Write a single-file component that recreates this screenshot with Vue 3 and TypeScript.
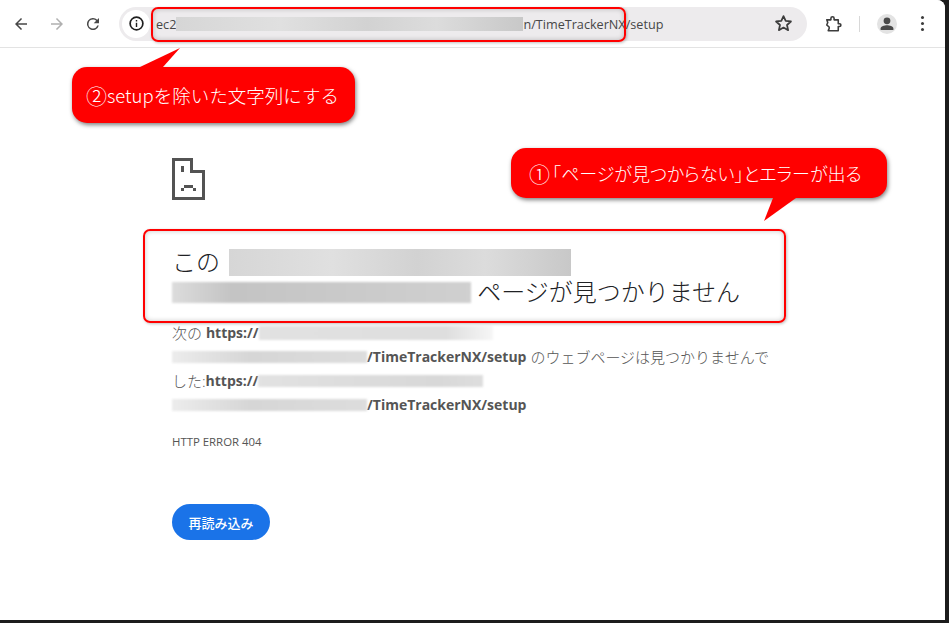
<script setup lang="ts">
const urlPath = '/TimeTrackerNX/setup';
</script>

<template>
  <div class="screen">
    <div class="window">
      <header class="toolbar">
        <svg class="nav first" viewBox="0 0 24 24"><path d="M20 11H7.8l5.6-5.6L12 4l-8 8 8 8 1.4-1.4L7.8 13H20z" fill="#474747" /></svg>
        <svg class="nav fwd" viewBox="0 0 24 24"><path d="M4 11h12.2l-5.6-5.6L12 4l8 8-8 8-1.4-1.4 5.6-5.6H4z" fill="#b0b0b0" /></svg>
        <svg class="nav reload" viewBox="0 0 24 24"><path d="M17.65 6.35A8 8 0 1 0 19.73 14h-2.08A6 6 0 1 1 12 6c1.66 0 3.14.69 4.22 1.78L13 11h7V4z" fill="#474747" /></svg>
        <div class="omnibox">
          <span class="info">
            <svg viewBox="0 0 24 24" width="17" height="17"><circle cx="12" cy="12" r="9" fill="none" stroke="#1f1f1f" stroke-width="2.4" /><path d="M11 11h2v6h-2zM11 7h2v2h-2z" fill="#1f1f1f" /></svg>
          </span>
          <span class="url">ec2<span class="blur url-blur"></span>n{{ urlPath }}</span>
          <svg class="star" viewBox="0 0 24 24"><path d="M12 3.6l2.5 5.5 6 .6-4.5 4 1.3 5.9-5.3-3-5.3 3L8 13.7l-4.5-4 6-.6z" fill="none" stroke="#3c3c3c" stroke-width="2" stroke-linejoin="round" /></svg>
        </div>
        <svg class="puzzle" viewBox="0 0 24 24"><path d="M4.5 7h5V5.2a1.9 1.9 0 0 1 3.8 0V7h5v4.6h1.5a1.7 1.7 0 0 1 0 3.4h-1.5v5h-12l.9-2.2a2.4 2.4 0 0 0 0-2.4L4.5 13.2l1.2-3z" fill="none" stroke="#3c3c3c" stroke-width="1.9" stroke-linejoin="round" /></svg>
        <span class="divider"></span>
        <span class="avatar">
          <svg viewBox="0 0 20 20" width="20" height="20"><circle cx="10" cy="6.8" r="3.4" fill="#4a4a4a" /><path d="M3.6 16v-1.6c0-2.2 4-3.2 6.4-3.2s6.4 1 6.4 3.2V16z" fill="#4a4a4a" /></svg>
        </span>
        <span class="dots"><i></i><i></i><i></i></span>
      </header>

      <main class="page">
        <svg class="sad" width="33" height="42" viewBox="0 0 33 42" shape-rendering="crispEdges">
          <path d="M0 0h21v3h3v3h3v3h3v3h3v30H0zM3 3v36h27V15H18V3z" fill="#535353" fill-rule="evenodd" />
          <path d="M21 3h3v3h3v3h3v3h-9z" fill="#fff" />
          <path d="M9 8h3v6H9zM9 30h3v3H9zM12 27h9v3h-9zM21 30h3v3h-3z" fill="#535353" />
        </svg>
        <h1 class="title">
          <span class="line">この <span class="blur title-blur-1"></span></span>
          <span class="line"><span class="blur title-blur-2"></span> ページが見つかりません</span>
        </h1>
        <p class="desc">
          <span class="row">次の <b>https://</b><span class="blur b1"></span></span>
          <span class="row"><span class="blur b2"></span><b>{{ urlPath }}</b> のウェブページは見つかりませんで</span>
          <span class="row">した:<b>https://</b><span class="blur b3"></span></span>
          <span class="row"><span class="blur b2"></span><b>{{ urlPath }}</b></span>
        </p>
        <div class="code">HTTP ERROR 404</div>
        <button class="reload-btn">再読み込み</button>
      </main>
    </div>

    <div class="frame frame-url"></div>
    <div class="frame frame-title"></div>

    <div class="callout callout-setup">
      <svg class="tail" width="41" height="19" viewBox="0 0 41 19"><path d="M0 19L40 0 23 19z" fill="#f00" /></svg>
      <span class="circled">②</span>setupを除いた文字列にする
    </div>
    <div class="callout callout-error">
      <svg class="tail" width="40" height="30" viewBox="0 0 40 30"><path d="M9 0L0 23 32 0z" fill="#f00" /></svg>
      <span class="circled">①</span><span class="msg">「ページが見つからない」とエラーが出る</span>
    </div>
  </div>
</template>

<style>
html,
body {
  margin: 0;
  background: #1c1c1c;
}
</style>

<style scoped>
.screen {
  position: relative;
  width: 949px;
  height: 623px;
  overflow: hidden;
  background: #1c1c1c;
  font-family: "Open Sans", "Noto Sans CJK JP", sans-serif;
}
.window {
  width: 945px;
  height: 620px;
  background: #fff;
  border-top-right-radius: 8px;
  overflow: hidden;
}
.toolbar {
  box-sizing: border-box;
  height: 48px;
  display: flex;
  align-items: center;
  background: #fff;
  border-bottom: 1px solid #e3e3e3;
}
.nav {
  width: 18px;
  height: 18px;
  flex: none;
}
.first {
  margin-left: 12px;
}
.fwd {
  margin-left: 18px;
}
.reload {
  margin-left: 18px;
}
.omnibox {
  margin-left: 17px;
  flex: none;
  width: 688px;
  height: 34px;
  border-radius: 17px;
  background: #edebed;
  display: flex;
  align-items: center;
}
.info {
  margin-left: 3px;
  width: 28px;
  height: 28px;
  border-radius: 50%;
  background: #fff;
  display: flex;
  align-items: center;
  justify-content: center;
  flex: none;
}
.url {
  margin-left: 6px;
  font-size: 12.65px;
  color: #474747;
  display: flex;
  align-items: center;
  white-space: nowrap;
}
.url-blur {
  width: 347px;
  height: 14px;
}
.star {
  width: 21px;
  height: 21px;
  margin-left: auto;
  margin-right: 13px;
  flex: none;
}
.puzzle {
  width: 20px;
  height: 20px;
  margin-left: 16px;
  flex: none;
}
.divider {
  width: 1px;
  height: 16px;
  background: #d8d8d8;
  margin-left: 16px;
  flex: none;
}
.avatar {
  width: 20px;
  height: 20px;
  margin-left: 17px;
  border-radius: 50%;
  background: #e3e3e3;
  flex: none;
}
.dots {
  margin-left: 24px;
  display: flex;
  flex-direction: column;
  gap: 3px;
  flex: none;
}
.dots i {
  display: block;
  width: 3px;
  height: 3px;
  border-radius: 50%;
  background: #3c3c3c;
}
.page {
  padding: 110px 0 0 172px;
  color: #555;
}
.sad {
  display: block;
}
.title {
  margin: 47px 0 0;
  font-size: 24px;
  font-weight: 300;
  line-height: 30px;
  color: #202124;
}
.line {
  display: flex;
  align-items: center;
  white-space: pre;
  height: 30px;
}
.blur {
  display: inline-block;
  background: linear-gradient(90deg, #d6d6d6, #e0e0e0 30%, #d2d2d2 55%, #dcdcdc 75%, #c8c8c8);
}
.title-blur-1 {
  width: 342px;
  height: 27px;
  margin-left: 3px;
}
.title-blur-2 {
  width: 299px;
  height: 21px;
  background: linear-gradient(90deg, #dcdcdc, #c4c4c4 20%, #cacaca 60%, #d0d0d0);
  filter: blur(1px);
}
.desc {
  margin: 14px 0 0;
  font-size: 15px;
  line-height: 24px;
  font-weight: 300;
}
.desc b {
  font-size: 14px;
  font-weight: 700;
}
.row {
  display: flex;
  align-items: center;
  white-space: pre;
  height: 24px;
}
.b1 {
  width: 234px;
  height: 14px;
  background: linear-gradient(90deg, #e2e2e2, #dedede 80%, #f6f6f6);
  filter: blur(1px);
}
.b2 {
  width: 195px;
  height: 12px;
  background: linear-gradient(90deg, #ececec, #d6d6d6 40%, #dddddd);
  filter: blur(1px);
}
.b3 {
  width: 225px;
  height: 12px;
  background: linear-gradient(90deg, #e2e2e2, #d8d8d8 80%, #dedede);
  filter: blur(1px);
}
.code {
  margin-top: 17px;
  font-size: 11.4px;
  line-height: 16px;
}
.reload-btn {
  display: block;
  margin-top: 54px;
  width: 98px;
  height: 36px;
  border: 0;
  border-radius: 18px;
  background: #1a73e8;
  color: #fff;
  font: 500 13px "Open Sans", "Noto Sans CJK JP", sans-serif;
  padding: 0;
}
.frame {
  position: absolute;
  box-sizing: border-box;
  border: 2px solid #f00;
  border-radius: 7px;
  box-shadow: inset 0 0 5px rgba(0, 0, 0, 0.22), 1px 1px 3px rgba(0, 0, 0, 0.25);
}
.frame-url {
  left: 151px;
  top: 7px;
  width: 475px;
  height: 35px;
}
.frame-title {
  left: 143px;
  top: 229px;
  width: 643px;
  height: 94px;
}
.callout {
  position: absolute;
  box-sizing: border-box;
  background: #f00;
  color: #fff;
  border-radius: 15px;
  display: flex;
  align-items: center;
  white-space: nowrap;
  box-shadow: 1px 2px 4px rgba(0, 0, 0, 0.5);
  font-family: "Noto Sans CJK JP", sans-serif;
  font-weight: 300;
}
.tail {
  position: absolute;
}
.circled {
  font-size: 21px;
}
.callout-setup {
  left: 72px;
  top: 67px;
  width: 283px;
  height: 56px;
  padding-left: 14px;
  font-size: 18.5px;
}
.callout-setup .tail {
  left: 68px;
  top: -19px;
}
.callout-error {
  left: 511px;
  top: 148px;
  width: 376px;
  height: 50px;
  padding-left: 18px;
  font-size: 18px;
}
.msg {
  font-feature-settings: "palt";
  margin-left: 2px;
}
.callout-error .tail {
  left: 253px;
  top: 50px;
}
</style>
